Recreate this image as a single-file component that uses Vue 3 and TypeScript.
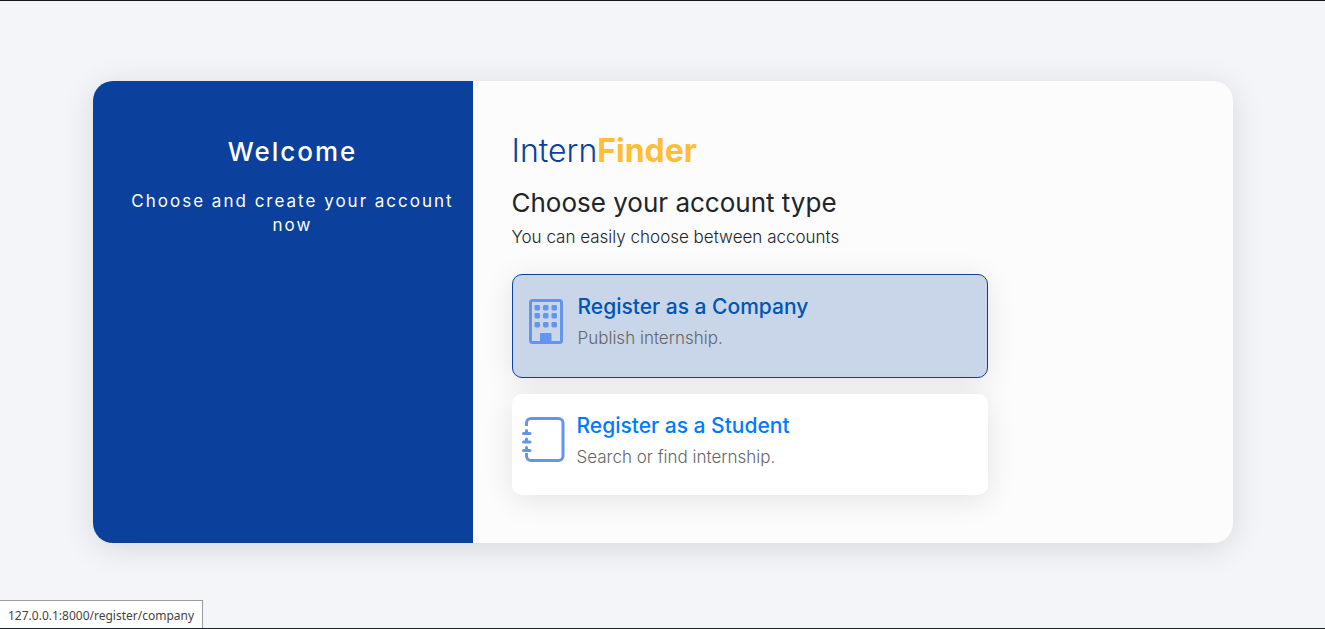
<script setup lang="ts">
import { ref } from 'vue'

interface Account {
  id: 'company' | 'student'
  title: string
  text: string
  href: string
}

const accounts: Account[] = [
  { id: 'company', title: 'Register as a Company', text: 'Publish internship.', href: '#/register/company' },
  { id: 'student', title: 'Register as a Student', text: 'Search or find internship.', href: '#/register/student' },
]

const active = ref<Account['id']>('company')
</script>

<template>
  <div class="page">
    <main class="card">
      <aside class="welcome">
        <h2>Welcome</h2>
        <p>Choose and create your account now</p>
      </aside>
      <section class="content">
        <h1 class="brand">Intern<b>Finder</b></h1>
        <h3 class="heading">Choose your account type</h3>
        <p class="lead">You can easily choose between accounts</p>
        <nav class="options">
          <a
            v-for="account in accounts"
            :key="account.id"
            :href="account.href"
            :class="['option', account.id, { active: active === account.id }]"
            @mouseenter="active = account.id"
          >
            <svg v-if="account.id === 'company'" class="icon" viewBox="0 0 48 48" aria-hidden="true">
              <rect x="8.5" y="3.5" width="31" height="42" rx="2" fill="none" stroke="currentColor" stroke-width="3" />
              <g fill="currentColor">
                <template v-for="y in [8, 16, 25]" :key="y">
                  <rect v-for="x in [12.5, 21, 29.5]" :key="x" :x="x" :y="y" width="5.5" height="5.5" rx="1.4" />
                </template>
                <path d="M18 46V37q0-1 1-1h9.500q1 0 1 1v9z" />
              </g>
            </svg>
            <svg v-else class="icon" viewBox="0 0 48 48" aria-hidden="true">
              <path
                d="M5.500 10V7a4.500 4.500 0 0 1 4.500-4.500h27.500a4.500 4.500 0 0 1 4.500 4.500v33a4.500 4.500 0 0 1-4.500 4.500H10a4.500 4.500 0 0 1-4.500-4.500v-3"
                fill="none" stroke="currentColor" stroke-width="3"
              />
              <path
                v-for="y in [15.5, 24, 32.500]" :key="y"
                :d="`M4 ${y - 1}q0-1.500 1.500-1.500t1.500 1.500v1.500h2q1.500 0 1.500 1.500t-1.500 1.500H2.500q-1.500 0-1.500-1.500t1.500-1.500h1.500z`"
                fill="currentColor"
              />
            </svg>
            <span class="label">
              <span class="title">{{ account.title }}</span>
              <span class="text">{{ account.text }}</span>
            </span>
          </a>
        </nav>
      </section>
    </main>
    <div class="status">127.0.0.1:8000/register/company</div>
  </div>
</template>

<style>
body {
  margin: 0;
  background: #f3f5f9;
}
</style>

<style scoped>
* {
  box-sizing: border-box;
}

.page {
  min-height: 100vh;
  padding: 80px 16px;
  border-top: 1px solid #14161c;
  border-bottom: 1px solid #17212f;
  background: #f3f5f9;
  color: #212529;
  font: 17px/24px Inter, "Open Sans", sans-serif;
}

.card {
  display: grid;
  grid-template-columns: 1fr 2fr;
  max-width: 1140px;
  margin: 0 auto;
  border-radius: 20px;
  overflow: hidden;
  background: #fcfcfc;
  box-shadow: 0 5px 32px rgba(0, 0, 0, 0.12);
}

h1,
h2,
h3,
p {
  margin: 0;
}

.welcome {
  padding: 55px 12px 48px 32px;
  background: #0b409c;
  color: #fff;
  text-align: center;
  letter-spacing: 2px;
}

.welcome h2 {
  margin-bottom: 22px;
  font-size: 26px;
  font-weight: 500;
  line-height: 31px;
}

.content {
  padding: 52px 40px 48px 39px;
}

.brand {
  color: #0b409c;
  font-size: 32px;
  font-weight: 300;
  line-height: 36px;
}

.brand b {
  color: #ffbe33;
  font-weight: 700;
}

.heading {
  margin-top: 18px;
  font-size: 26px;
  font-weight: 400;
  line-height: 32px;
}

.lead {
  margin-top: 6px;
  font-weight: 300;
}

.options {
  display: grid;
  gap: 16px;
  max-width: 476px;
  margin-top: 25px;
}

.option {
  display: flex;
  align-items: flex-start;
  gap: 8px;
  min-height: 101px;
  padding: 16px 9px;
  border-radius: 10px;
  background: #fff;
  box-shadow: 0 5px 30px rgba(0, 0, 0, 0.1);
  text-decoration: none;
}

.option.active {
  min-height: 104px;
  border: 1px solid #0b409c;
  background: #c9d5e8;
}

.icon {
  flex: none;
  width: 48px;
  height: 48px;
  margin-top: 6px;
  color: #6495ed;
}

.label {
  display: grid;
  gap: 4px;
}

.title {
  color: #007bff;
  font-size: 21px;
  font-weight: 500;
  line-height: 31px;
}

.active .title {
  color: #0056b3;
}

.text {
  color: #666;
  font-weight: 300;
}

.status {
  position: fixed;
  bottom: 1px;
  left: 0;
  padding: 4px 8px 2px;
  border: 1px solid #9a9da3;
  border-width: 1px 1px 0 0;
  background: #fff;
  color: #444;
  font: 12px/21px "Noto Sans", "Open Sans", sans-serif;
}
</style>
